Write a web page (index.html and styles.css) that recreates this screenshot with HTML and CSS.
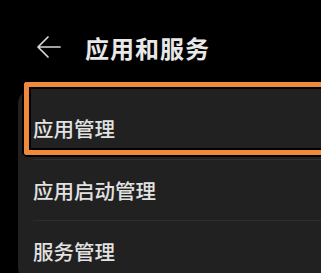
FILE: index.html
```html
<!DOCTYPE html>
<html lang="zh-CN">
<head>
    <meta charset="UTF-8">
    <meta name="viewport" content="width=device-width, initial-scale=1.0">
    <title>应用和服务</title>
    <link rel="stylesheet" href="styles.css">
</head>
<body>

<div class="header">
    <svg class="back" width="25" height="24" viewBox="0 0 25 24">
        <path d="M24 12H2M12 2L2 12L12 22" fill="none" stroke="#d8d8d8" stroke-width="1.7" stroke-linecap="round" stroke-linejoin="round"/>
    </svg>
    <h1>应用和服务</h1>
</div>

<!-- Settings list -->
<div class="card">
    <div class="focus-ring"></div>
    <div class="item"><span>应用管理</span></div>
    <div class="item"><span>应用启动管理</span></div>
    <div class="item"><span>服务管理</span></div>
</div>

</body>
</html>
```

FILE: styles.css
```css
body {
    margin: 0;
    background-color: #000;
    color: #e4e4e4;
    font-family: "Noto Sans CJK SC", "Noto Sans", sans-serif;
    overflow: hidden;
}

.header {
    display: flex;
    align-items: center;
    height: 58px;
    margin-top: 18px;
    padding-left: 36px;
}

.back {
    flex: none;
}

.header h1 {
    margin: 0 0 0 24px;
    font-size: 24px;
    font-weight: 600;
    color: #e8e8e8;
    letter-spacing: 1px;
}

.card {
    position: relative;
    margin: 12px 0 0 18px;
    padding-top: 10px;
    background-color: #212121;
    border-radius: 16px 0 0 16px;
}

.item {
    display: flex;
    align-items: center;
    height: 61.5px;
    margin-left: 15px;
    border-bottom: 1px solid #2e2e2e;
    box-sizing: border-box;
    font-size: 20.5px;
    font-weight: 500;
    color: #e2e2e2;
}

/* focus highlight runs off the right edge */
.focus-ring {
    position: absolute;
    top: -6px;
    left: 6px;
    right: 0;
    height: 73px;
    box-sizing: border-box;
    border: 5px solid #ef8a3c;
    border-right: none;
    border-radius: 3px 0 0 3px;
    box-shadow:
        inset 2px 0 0 #000, inset 0 2px 0 #000, inset 0 -2px 0 #000,
        -2px 0 0 #000, 0 2px 0 #000, 0 -2px 0 #000;
}
```
